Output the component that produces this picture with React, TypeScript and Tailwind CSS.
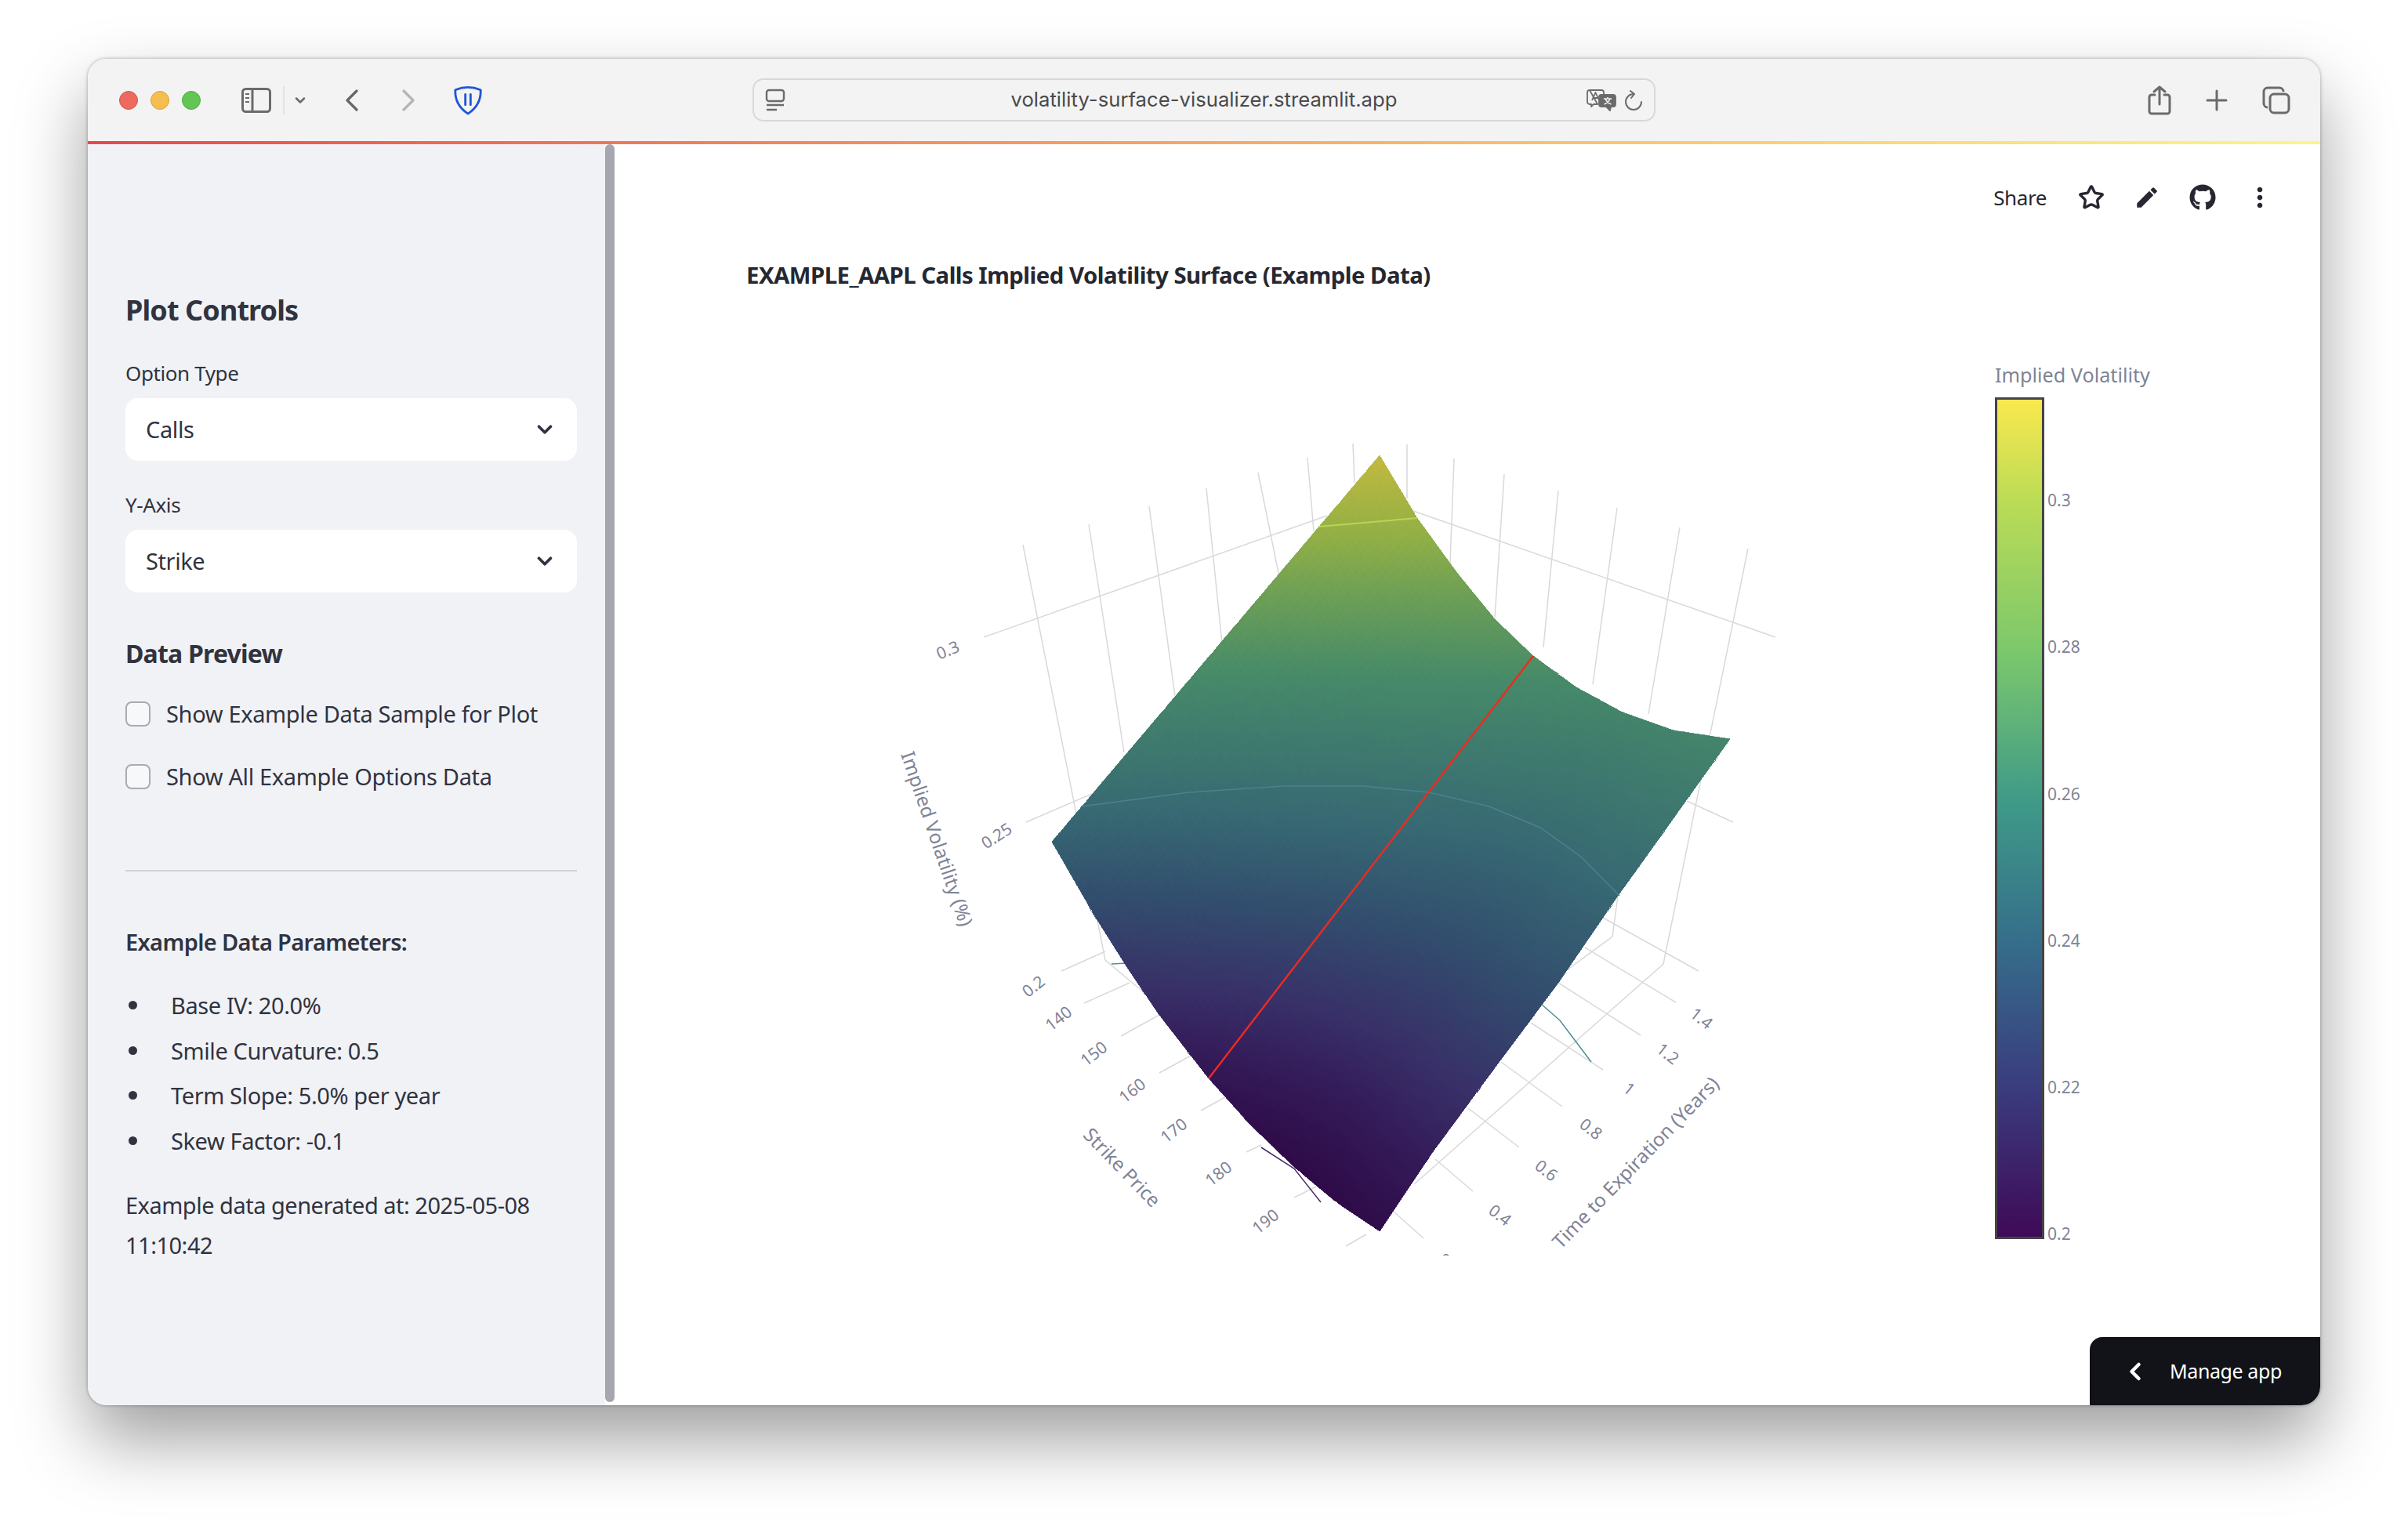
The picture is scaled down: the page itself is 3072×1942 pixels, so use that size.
import { Star, ChevronDown, ChevronLeft } from "lucide-react";
import { FaGithub } from "react-icons/fa";
import { MdEdit, MdMoreVert } from "react-icons/md";

const sans = "font-['Noto_Sans',sans-serif]";

// surface corners and edges, page pixels
const lowEdge: [number, number][] = [[1342, 1074], [1398, 1171], [1441, 1239], [1479, 1295], [1542, 1376], [1597, 1437], [1651, 1489], [1705, 1534], [1760, 1571]];
const highEdge: [number, number][] = [[1760, 581], [1793, 636], [1808, 661], [1858, 730], [1907, 790], [1956, 837], [2011, 877], [2070, 909], [2135, 932], [2207, 943]];
const nearEdge: [number, number][] = [[1760, 1571], [1827, 1471], [1911, 1357], [1988, 1254], [2064, 1143], [2095, 1100], [2207, 943]];

function along(edge: [number, number][], t: number): [number, number] {
  const x0 = edge[0][0];
  const x1 = edge[edge.length - 1][0];
  const x = x0 + (x1 - x0) * t;
  for (let i = 1; i < edge.length; i++) {
    if (x <= edge[i][0]) {
      const f = (x - edge[i - 1][0]) / (edge[i][0] - edge[i - 1][0]);
      return [x, edge[i - 1][1] + (edge[i][1] - edge[i - 1][1]) * f];
    }
  }
  return edge[edge.length - 1];
}

function point(u: number, v: number): [number, number] {
  const a = along(lowEdge, u);
  const b = along(highEdge, u);
  const c: [number, number] = [1342 + 418 * v, 1074 - 493 * v];
  const d = along(nearEdge, v);
  const out: [number, number] = [0, 0];
  for (const i of [0, 1]) {
    const bilinear =
      (1 - u) * (1 - v) * lowEdge[0][i] +
      u * (1 - v) * lowEdge[lowEdge.length - 1][i] +
      (1 - u) * v * highEdge[0][i] +
      u * v * highEdge[highEdge.length - 1][i];
    out[i] = (1 - v) * a[i] + v * b[i] + (1 - u) * c[i] + u * d[i] - bilinear;
  }
  return out;
}

const ramp: [number, number, number, number][] = [
  [0.199, 46, 8, 70],
  [0.21, 52, 26, 88],
  [0.22, 56, 48, 104],
  [0.235, 50, 78, 110],
  [0.25, 55, 105, 115],
  [0.275, 70, 138, 105],
  [0.29, 110, 160, 85],
  [0.3, 145, 175, 70],
  [0.316, 198, 186, 62],
];

function colorAt(z: number) {
  for (let i = 1; i < ramp.length; i++) {
    if (z <= ramp[i][0]) {
      const f = Math.max(0, (z - ramp[i - 1][0]) / (ramp[i][0] - ramp[i - 1][0]));
      const c = [1, 2, 3].map((k) => Math.round(ramp[i - 1][k] + (ramp[i][k] - ramp[i - 1][k]) * f));
      return `rgb(${c[0]},${c[1]},${c[2]})`;
    }
  }
  return "rgb(198,186,62)";
}

function surfaceZ(u: number, v: number) {
  const smile = u < 0.8 ? 0.2 + 0.045 * (1 - u / 0.8) ** 2 : 0.2 + 0.006 * (u - 0.8);
  return smile + 0.07 * v;
}

const N = 80;
const cells: { d: string; fill: string }[] = [];
for (let i = 0; i < N; i++) {
  for (let j = 0; j < N; j++) {
    const pts = [point(i / N, j / N), point((i + 1) / N, j / N), point((i + 1) / N, (j + 1) / N), point(i / N, (j + 1) / N)];
    cells.push({
      d: "M" + pts.map((p) => `${p[0].toFixed(1)} ${p[1].toFixed(1)}`).join("L") + "Z",
      fill: colorAt(surfaceZ((i + 0.5) / N, (j + 0.5) / N)),
    });
  }
}

// axis grid, drawn under the surface
const grid = [
  "M1255 813L1693 658", "M1803 652L2265 813", "M1309 1049L1402 1009", "M2152 1022L2211 1049",
  "M1305 695L1410 1225L1465 1271", "M1389 669L1434 960", "M1466 646L1499 888", "M1539 623L1559 821", "M1605 603L1632 736", "M1668 584L1676 678", "M1726 566L1728 616",
  "M1795 567L1795 636", "M1855 585L1850 719", "M1919 605L1907 788", "M1988 626L1969 826", "M2063 648L2032 873", "M2143 673L2103 911", "M2230 700L2122 1230L1804 1511", "M2064 1143L2057 1195L1992 1243",
  "M1354 1239L1410 1214", "M1383 1280L1441 1254", "M1430 1322L1479 1295", "M1479 1369L1521 1346", "M1532 1417L1563 1400", "M1590 1470L1609 1461", "M1651 1528L1685 1511", "M1717 1590L1743 1575",
  "M1816 1580L1777 1545", "M1879 1520L1831 1479", "M1938 1464L1873 1414", "M1993 1412L1915 1355", "M2045 1365L1953 1305", "M2093 1321L1988 1254", "M2138 1279L2022 1209", "M2167 1239L2045 1171",
];

const ticks: [string, number, number, number][] = [
  ["0.3", 1209, 829, -22], ["0.25", 1271, 1066, -33], ["0.2", 1318, 1258, -38],
  ["140", 1350, 1299, -38], ["150", 1395, 1344, -38], ["160", 1444, 1391, -38], ["170", 1497, 1442, -38], ["180", 1554, 1497, -38], ["190", 1614, 1558, -38],
  ["1.4", 2171, 1299, 38], ["1.2", 2128, 1344, 38], ["1", 2079, 1389, 38], ["0.8", 2030, 1440, 38], ["0.6", 1973, 1493, 38], ["0.4", 1914, 1550, 38], ["0.2", 1850, 1612, 38],
];

const titles: [string, number, number, number][] = [
  ["Implied Volatility (%)", 1196, 1070, 71],
  ["Strike Price", 1432, 1489, 46],
  ["Time to Expiration (Years)", 2086, 1483, -46],
];

const barTicks: [string, number][] = [["0.3", 638], ["0.28", 825], ["0.26", 1013], ["0.24", 1200], ["0.22", 1387], ["0.2", 1574]];

function SurfacePlot() {
  return (
    <svg viewBox="1100 420 1700 1200" className="block w-[1700px] h-[1200px]" style={{ fontFamily: "'Noto Sans', sans-serif" }}>
      <defs>
        <clipPath id="plotClip">
          <rect x="1100" y="420" width="1400" height="1182" />
        </clipPath>
        <linearGradient id="viridis" x1="0" y1="0" x2="0" y2="1">
          <stop offset="0" stopColor="#fbe84f" />
          <stop offset="0.12" stopColor="#bcdc55" />
          <stop offset="0.3" stopColor="#7cc86c" />
          <stop offset="0.48" stopColor="#3f9a88" />
          <stop offset="0.65" stopColor="#356d8a" />
          <stop offset="0.82" stopColor="#3a3c7e" />
          <stop offset="1" stopColor="#3f0a57" />
        </linearGradient>
      </defs>
      <g fill="none" stroke="#d9d9dc" strokeWidth="1.5">
        {grid.map((d) => <path key={d} d={d} />)}
      </g>
      <path d="M1965 1280L1990 1302L2030 1355" fill="none" stroke="#4f8f98" strokeWidth="1.5" />
      <path d="M1418 1230L1437 1229" fill="none" stroke="#4f8f98" strokeWidth="1.5" />
      <path d="M1609 1464L1651 1491L1685 1534" fill="none" stroke="#4b2a6e" strokeWidth="1.5" />
      <g shapeRendering="crispEdges">
        {cells.map((c, i) => <path key={i} d={c.d} fill={c.fill} stroke={c.fill} strokeWidth="0.8" />)}
      </g>
      <path d="M1379 1029L1517 1011L1636 1003L1739 1003L1823 1011L1900 1029L1965 1056L2018 1094L2066 1143" fill="none" stroke="#4a8291" strokeWidth="1.5" />
      <path d="M1682 672L1808 661" fill="none" stroke="#b9d455" strokeWidth="2" />
      <path d="M1956 837L1542 1376" fill="none" stroke="#f02a1e" strokeWidth="2.4" />
      <g clipPath="url(#plotClip)" fill="#7f8396" fontSize="21">
        {ticks.map(([t, x, y, r]) => (
          <text key={t + x} x={x} y={y} textAnchor="middle" dominantBaseline="central" transform={`rotate(${r} ${x} ${y})`}>{t}</text>
        ))}
      </g>
      <g fill="#7f8396" fontSize="24.5">
        {titles.map(([t, x, y, r]) => (
          <text key={t} x={x} y={y} textAnchor="middle" dominantBaseline="central" transform={`rotate(${r} ${x} ${y})`}>{t}</text>
        ))}
      </g>
      <text x="2545" y="478" fill="#7f8396" fontSize="25.2" dominantBaseline="central">Implied Volatility</text>
      <rect x="2546.5" y="508.5" width="60" height="1071" fill="url(#viridis)" stroke="#444444" strokeWidth="3" />
      <g fill="#7f8396" fontSize="21">
        {barTicks.map(([t, y]) => <text key={t} x="2612" y={y} dominantBaseline="central">{t}</text>)}
      </g>
    </svg>
  );
}

function SelectBox({ label, value, className }: { label: string; value: string; className: string }) {
  return (
    <div className={className}>
      <div className="text-[26px] leading-[36px] tracking-[-0.4px]">{label}</div>
      <div className="mt-[14px] h-[80px] rounded-[16px] bg-white flex items-center justify-between pl-[26px] pr-[26px] text-[29px] tracking-[-0.4px]">
        <span>{value}</span>
        <ChevronDown className="w-[30px] h-[30px]" strokeWidth={3} />
      </div>
    </div>
  );
}

function CheckRow({ label, className }: { label: string; className: string }) {
  return (
    <div className={`flex items-center ${className}`}>
      <span className="w-[32px] h-[32px] rounded-[8px] bg-[#f7f8fa] border-2 border-[#a9abb3]" />
      <span className="ml-[20px] text-[29px] leading-[40px] tracking-[-0.35px]">{label}</span>
    </div>
  );
}

const params = ["Base IV: 20.0%", "Smile Curvature: 0.5", "Term Slope: 5.0% per year", "Skew Factor: -0.1"];

function Sidebar() {
  return (
    <aside className="w-[660px] shrink-0 bg-[#f0f2f6] pl-[48px] pr-[36px] pt-[188px] text-[#31333f]">
      <h2 className="text-[36px] leading-[48px] font-bold tracking-[-0.9px]">Plot Controls</h2>
      <SelectBox label="Option Type" value="Calls" className="mt-[38px]" />
      <SelectBox label="Y-Axis" value="Strike" className="mt-[38px]" />
      <h3 className="mt-[56px] text-[32px] leading-[44px] font-bold tracking-[-0.8px]">Data Preview</h3>
      <CheckRow label="Show Example Data Sample for Plot" className="mt-[35px]" />
      <CheckRow label="Show All Example Options Data" className="mt-[40px]" />
      <div className="mt-[99px] h-[2px] bg-[#d1d3d9]" />
      <div className="mt-[70px] text-[29px] leading-[40px] font-semibold tracking-[-0.65px]">Example Data Parameters:</div>
      <ul className="mt-[32px]">
        {params.map((p) => (
          <li key={p} className="flex items-center h-[57.6px] text-[29px] tracking-[-0.4px]">
            <span className="w-[11px] h-[11px] ml-[4px] rounded-full bg-[#31333f]" />
            <span className="ml-[43px]">{p}</span>
          </li>
        ))}
      </ul>
      <p className="mt-[28px] text-[29px] leading-[51px] tracking-[-0.5px] w-[560px]">
        Example data generated at: 2025-05-08 11:10:42
      </p>
    </aside>
  );
}

function ShieldIcon() {
  return (
    <svg viewBox="0 0 40 40" className="w-[38px] h-[38px]" fill="none" stroke="#1f56d6" strokeWidth="3" strokeLinejoin="round">
      <path d="M3 6 Q20 -1 37 6 Q38 26 20 38 Q2 26 3 6Z" />
      <path d="M16.5 12V26M23.5 12V26" strokeLinecap="round" />
    </svg>
  );
}

function SidebarIcon() {
  return (
    <svg viewBox="0 0 38 32" className="w-[38px] h-[32px]" fill="none" stroke="#6b6b6b" strokeWidth="3">
      <rect x="1.5" y="1.5" width="35" height="29" rx="4" />
      <path d="M14 2V30" />
      <path d="M5 8H10M5 13H10M5 18H10" strokeWidth="2" />
    </svg>
  );
}

function NavChevron({ flip, color }: { flip?: boolean; color: string }) {
  return (
    <svg viewBox="0 0 16 28" className="w-[16px] h-[28px]" fill="none" stroke={color} strokeWidth="3.2" strokeLinecap="round" strokeLinejoin="round">
      <path d={flip ? "M2 2L14 14L2 26" : "M14 2L2 14L14 26"} />
    </svg>
  );
}

function TranslateIcon() {
  return (
    <svg viewBox="0 0 38 28" className="w-[38px] h-[28px] shrink-0" fill="none" stroke="#6b6b6b" strokeWidth="1.8" strokeLinejoin="round">
      <path d="M4 1H19a3 3 0 0 1 3 3V6M14 19H9L6 22V19H4a3 3 0 0 1-3-3V4a3 3 0 0 1 3-3Z" />
      <path d="M7 14L11.5 4L16 14M8.5 11H14.5" />
      <path d="M19 7H34a3 3 0 0 1 3 3V19a3 3 0 0 1-3 3H31L30 27L25 22H19a3 3 0 0 1-3-3V10a3 3 0 0 1 3-3Z" fill="#6b6b6b" />
      <path d="M22 12H32M27 10V12M24 12Q26 17 31.5 19M30 12Q28 17 22.5 19" stroke="#f3f3f3" strokeWidth="1.6" />
    </svg>
  );
}

function ReloadIcon() {
  return (
    <svg viewBox="0 0 24 26" className="w-[24px] h-[26px] shrink-0" fill="none" stroke="#6b6b6b" strokeWidth="2" strokeLinecap="round" strokeLinejoin="round">
      <path d="M12 5a10 10 0 1 0 10 10" />
      <path d="M8 1L13 5L9 10" />
    </svg>
  );
}

function ShareIcon() {
  return (
    <svg viewBox="0 0 30 38" className="w-[30px] h-[38px]" fill="none" stroke="#6b6b6b" strokeWidth="3" strokeLinecap="round" strokeLinejoin="round">
      <path d="M9 12H5a3 3 0 0 0-3 3V33a3 3 0 0 0 3 3H25a3 3 0 0 0 3-3V15a3 3 0 0 0-3-3H21" />
      <path d="M15 24V2M8 8L15 2L22 8" />
    </svg>
  );
}

function PlusIcon() {
  return (
    <svg viewBox="0 0 28 28" className="w-[28px] h-[28px]" fill="none" stroke="#6b6b6b" strokeWidth="3" strokeLinecap="round">
      <path d="M14 2V26M2 14H26" />
    </svg>
  );
}

function TabsIcon() {
  return (
    <svg viewBox="0 0 36 36" className="w-[36px] h-[36px]" fill="none" stroke="#6b6b6b" strokeWidth="3">
      <rect x="10" y="10" width="24" height="24" rx="5" />
      <path d="M7 27a5 5 0 0 1-5-5V7a5 5 0 0 1 5-5H22a5 5 0 0 1 5 5" />
    </svg>
  );
}

function Toolbar() {
  return (
    <header className="h-[105px] bg-[#f3f3f3] flex items-center">
      <span className="ml-[40px] w-[24px] h-[24px] rounded-full bg-[#ed6a5e] border border-[#d4574c]" />
      <span className="ml-[16px] w-[24px] h-[24px] rounded-full bg-[#f5bf4f] border border-[#d9a33c]" />
      <span className="ml-[16px] w-[24px] h-[24px] rounded-full bg-[#62c554] border border-[#52ab46]" />
      <span className="ml-[52px] flex"><SidebarIcon /></span>
      <span className="ml-[15px] w-[2px] h-[36px] bg-[#e2e2e2]" />
      <span className="ml-[10px] flex text-[#6b6b6b]"><ChevronDown className="w-[20px] h-[20px]" strokeWidth={3} /></span>
      <span className="ml-[48px] flex"><NavChevron color="#666666" /></span>
      <span className="ml-[56px] flex"><NavChevron flip color="#b5b5b5" /></span>
      <span className="ml-[49px] flex"><ShieldIcon /></span>
      <div className="ml-[344px] w-[1152px] h-[55px] rounded-[14px] border-2 border-[#d8d8d8] flex items-center px-[14px]">
        <span className="w-[76px] flex">
          <svg viewBox="0 0 26 30" className="w-[26px] h-[30px]" fill="none" stroke="#6b6b6b" strokeWidth="2.4">
            <rect x="2" y="2" width="22" height="14" rx="3" />
            <path d="M2 21H24M2 27H15" />
          </svg>
        </span>
        <span className="flex-1 text-center text-[25.7px] text-[#4a4a4a] font-['Inter',sans-serif]">volatility-surface-visualizer.streamlit.app</span>
        <span className="w-[76px] flex items-center justify-end gap-[10px]">
          <TranslateIcon />
          <ReloadIcon />
        </span>
      </div>
      <span className="ml-[628px] flex"><ShareIcon /></span>
      <span className="ml-[44px] flex"><PlusIcon /></span>
      <span className="ml-[44px] flex"><TabsIcon /></span>
    </header>
  );
}

function MainArea() {
  return (
    <main className="relative flex-1 bg-white text-[#262730]">
      <div className="flex items-center justify-end h-[50px] mt-[43px] pr-[57px]">
        <span className="text-[26px] tracking-[-0.4px] mr-[40px]">Share</span>
        <Star className="w-[34px] h-[34px] mr-[37px]" strokeWidth={2.4} />
        <MdEdit className="w-[34px] h-[34px] mr-[37px]" />
        <FaGithub className="w-[34px] h-[34px] mr-[36px]" />
        <MdMoreVert className="w-[40px] h-[40px]" />
      </div>
      <h1 className="ml-[168px] mt-[54px] text-[29.4px] leading-[40px] font-bold tracking-[-0.55px]">
        EXAMPLE_AAPL Calls Implied Volatility Surface (Example Data)
      </h1>
      <div className="ml-[316px] mt-[49px]"><SurfacePlot /></div>
      <button className="absolute right-0 bottom-0 w-[294px] h-[87px] bg-[#111318] rounded-tl-[16px] text-white flex items-center">
        <ChevronLeft className="ml-[40px] w-[36px] h-[36px]" strokeWidth={3} />
        <span className="ml-[26px] text-[25px] tracking-[-0.4px]">Manage app</span>
      </button>
    </main>
  );
}

export default function App() {
  return (
    <div className={`w-[3072px] h-[1942px] bg-white overflow-hidden pt-[75px] pl-[112px] ${sans}`}>
      <div className="relative w-[2848px] h-[1718px] rounded-[24px] overflow-hidden flex flex-col shadow-[0_44px_90px_rgba(0,0,0,0.38),0_0_4px_rgba(0,0,0,0.35)]">
        <Toolbar />
        <div className="h-[4px] bg-linear-to-r from-[#e8484a] to-[#fdf77f]" />
        <div className="flex flex-1 min-h-0">
          <Sidebar />
          <div className="w-[12px] shrink-0 mb-[4px] bg-[#a5a6af] rounded-full" />
          <MainArea />
        </div>
      </div>
    </div>
  );
}
